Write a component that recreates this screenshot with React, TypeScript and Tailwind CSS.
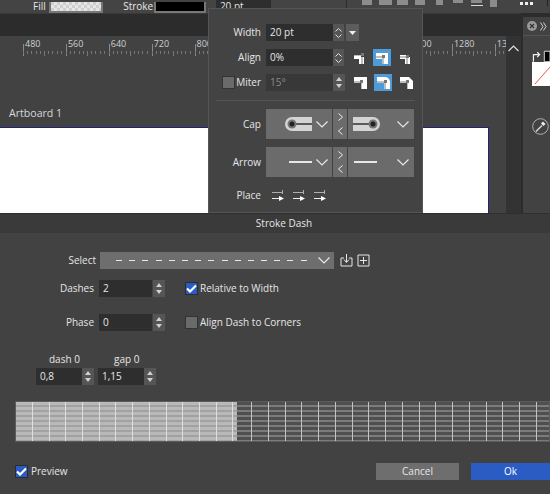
const Spin = ({ className = "" }: { className?: string }) => (
  <div className={`flex h-[17px] w-[12px] flex-col items-center justify-center gap-[3px] bg-[#555555] ${className}`}>
    <svg width="6" height="4" viewBox="0 0 6 4"><path d="M3 0 6 4H0z" fill="#d0d0d0" /></svg>
    <svg width="6" height="4" viewBox="0 0 6 4"><path d="M0 0h6L3 4z" fill="#d0d0d0" /></svg>
  </div>
);

const ChevSpin = () => (
  <div className="flex h-[17px] w-[11px] flex-col items-center justify-center gap-[2px] bg-[#555555]">
    <svg width="7" height="4" viewBox="0 0 7 4"><path d="M.5 3.500 3.500.5l3 3" fill="none" stroke="#e0e0e0" /></svg>
    <svg width="7" height="4" viewBox="0 0 7 4"><path d="M.5.5l3 3 3-3" fill="none" stroke="#e0e0e0" /></svg>
  </div>
);

const Chevron = () => (
  <svg width="12" height="7" viewBox="0 0 12 7"><path d="M.5.5 6 6l5.500-5.500" fill="none" stroke="#e8e8e8" strokeWidth="1.200" /></svg>
);

const Field = ({ value, className = "", dim }: { value: string; className?: string; dim?: boolean }) => (
  <div className={`flex h-[17px] items-center pl-1 text-[10px] ${dim ? "bg-[#383838] text-[#8a8a8a]" : "bg-[#2e2e2e] text-[#e6e6e6]"} ${className}`}>
    {value}
  </div>
);

// the little corner glyphs next to Align / Miter
const Corner = ({ active, d, dot }: { active?: boolean; d: string; dot: [number, number] }) => (
  <div className={`flex h-[17px] w-[18px] items-center justify-center ${active ? "bg-[#4f9ad8]" : ""}`}>
    <svg width="15" height="14" viewBox="0 0 15 14">
      <path d={d} fill="#ffffff" />
      <path d={`M1 ${dot[1] + 1}H${dot[0]}V13`} fill="none" stroke="#444444" strokeWidth="1" opacity="0.7" />
      <rect x={dot[0] - 1} y={dot[1] - 1} width="3" height="3" fill="#777777" />
    </svg>
  </div>
);

const alignInside = "M2 4h7v2h3v7H7V8H2z";
const alignCenter = "M1 2h12v11H7V8H1z";
const joinMiter = "M1 1h13v12H8V7H1z";
const joinRound = "M1 1h8a5 5 0 0 1 5 5v7H8V7H1z";
const joinBevel = "M1 1h9l4 4v8H8V7H1z";

const ToggleArrows = () => (
  <div className="flex h-[30px] w-[14px] flex-col items-center justify-center gap-[6px] bg-[#6b6b6b]">
    <svg width="5" height="8" viewBox="0 0 5 8"><path d="M.5.5 4.500 4 .5 7.500" fill="none" stroke="#eeeeee" /></svg>
    <svg width="5" height="8" viewBox="0 0 5 8"><path d="M4.500.5.5 4l4 3.500" fill="none" stroke="#eeeeee" /></svg>
  </div>
);

const CapLeft = () => (
  <svg width="27" height="14" viewBox="0 0 27 14">
    <path d="M7 0h20v14H7a7 7 0 0 1 0-14z" fill="#d4d4d4" />
    <path d="M7 6h20v2H7z" fill="#5a5a5a" />
    <circle cx="7" cy="7" r="4.500" fill="#777777" />
    <circle cx="7" cy="7" r="2.500" fill="#222222" />
  </svg>
);

const CapRight = () => (
  <svg width="27" height="14" viewBox="0 0 27 14">
    <path d="M20 0H0v14h20a7 7 0 0 0 0-14z" fill="#d4d4d4" />
    <path d="M20 6H0v2h20z" fill="#5a5a5a" />
    <circle cx="20" cy="7" r="4.500" fill="#777777" />
    <circle cx="20" cy="7" r="2.500" fill="#222222" />
  </svg>
);

const PlaceIcon = () => (
  <svg width="12" height="13" viewBox="0 0 12 13">
    <path d="M0 3.500h10M10.500 1v4" stroke="#b0b0b0" fill="none" />
    <path d="M0 9.500h7" stroke="#eeeeee" fill="none" />
    <path d="M7 7l5 2.500L7 12z" fill="#ffffff" />
  </svg>
);

const Ruler = () => {
  const labels = ["480", "560", "640", "720", "800", "880", "960", "1040", "1120", "1200", "1280", "13"];
  return (
    <div className="flex h-[20px] shrink-0 items-end overflow-hidden pl-[23px]">
      {labels.map((l) => (
        <div key={l} className="relative h-full w-[42.900px] shrink-0">
          <span className="absolute left-[2px] top-[2px] text-[9px] leading-[12px] text-[#cfcfcf]">{l}</span>
          <div className="absolute bottom-0 left-0 h-[12px] w-px bg-[#8a8a8a]" />
          <div className="absolute bottom-0 left-0 flex w-full justify-between pr-[4px]">
            {[0, 1, 2, 3, 4, 5, 6, 7, 8, 9].map((i) => (
              <div key={i} className={`w-px bg-[#777777] ${i === 5 ? "h-[5px]" : "h-[3px]"}`} />
            ))}
          </div>
        </div>
      ))}
    </div>
  );
};

const Check = () => (
  <div className="flex h-[13px] w-[13px] items-center justify-center border border-[#2c2c2c] bg-[#2a5cc4]">
    <svg width="11" height="9" viewBox="0 0 11 9"><path d="M1 4.500 4 7.500 10 1.500" fill="none" stroke="#ffffff" strokeWidth="2.200" /></svg>
  </div>
);

const Unchecked = () => <div className="h-[13px] w-[13px] border border-[#333333] bg-[#6a6a6a]" />;

const ToolbarIcons = () => (
  <svg className="ml-[10px] shrink-0" width="204" height="13" viewBox="0 0 204 13">
    <path d="M0 0h1v13H0z" fill="#2c2c2c" />
    <g fill="#8c8c8c">
      <path d="M16 0h10v5H16zM33 0h13v5H33zM51 0h11v5H51z" />
      <path d="M69 0h10v5H69z" />
      <path d="M90 0h7v5h-7zM107 0h10v3h-10zM125 0h11v3h-11zM144 0h7v7h-7z" />
    </g>
    <path d="M125 5h12v1h-12z" fill="#d8d8d8" />
    <path d="M174 2h3v3h-3zM179 2h3v3h-3zM184 2h3v3h-3z" fill="#eeeeee" />
    <path d="M201 0h1v6h-1z" fill="#222222" />
  </svg>
);

// preview strip: horizontal stripes with vertical ticks, left part is the dash
const Preview = () => (
  <div className="flex h-[41px] overflow-hidden border border-[#5c5c5c] bg-[#5c5c5c]">
    <div className="relative w-[221px] shrink-0 bg-[#b9b9b9]">
      <div className="absolute inset-0 bg-[repeating-linear-gradient(180deg,rgba(0,0,0,0)_0px,rgba(0,0,0,0)_3px,rgba(0,0,0,0.13)_3px,rgba(0,0,0,0.13)_5px)]" />
      <div className="absolute inset-0 flex gap-[15.700px] pl-[16px]">
        {Array.from({ length: 13 }).map((_, i) => (
          <div key={i} className="h-full w-px bg-[#dedede]" />
        ))}
      </div>
    </div>
    <div className="relative flex-1 bg-[#4f4f4f]">
      <div className="absolute inset-0 bg-[repeating-linear-gradient(180deg,rgba(255,255,255,0)_0px,rgba(255,255,255,0)_3px,rgba(255,255,255,0.25)_3px,rgba(255,255,255,0.25)_5px)]" />
      <div className="absolute inset-0 flex gap-[15.750px] pl-[14px]">
        {Array.from({ length: 18 }).map((_, i) => (
          <div key={i} className="h-full w-px bg-[#c4c4c4]" />
        ))}
      </div>
    </div>
  </div>
);

export default function App() {
  return (
    <div
      className="relative flex h-[494px] w-[550px] flex-col overflow-hidden bg-[#424242] text-[#e6e6e6]"
      style={{ fontFamily: '"Open Sans", "Liberation Sans", sans-serif' }}
    >
      {/* editor behind the dialog */}
      <div className="flex h-[213px] shrink-0 flex-col">
        <div className="flex h-[13px] shrink-0 items-end overflow-hidden bg-[#444444] text-[10px]">
          <span className="ml-[33px] w-[17px] leading-[14px]">Fill</span>
          <div className="h-[11px] w-[56px] border-x-2 border-b-2 border-[#777777] bg-[repeating-conic-gradient(#e6e6e6_0%_25%,#cfcfcf_0%_50%)] bg-[length:6px_6px]" />
          <span className="ml-[20px] w-[32px] leading-[14px]">Stroke</span>
          <div className="h-[11px] w-[54px] border-x-2 border-b-2 border-[#777777] bg-black" />
          <div className="ml-[10px] flex h-[13px] w-[57px] items-end bg-[#2e2e2e] pl-1 leading-[14px]">20 pt</div>
          <div className="w-[68px]" />
          <ToolbarIcons />
        </div>
        <div className="flex min-h-0 flex-1">
          <div className="flex min-w-0 flex-1 flex-col">
            <div className="h-[23px] shrink-0 border-t border-[#3a3a3a] bg-[#2c2c2c]" />
            <div className="flex min-h-0 flex-1">
              <div className="flex min-w-0 flex-1 flex-col">
                <Ruler />
                <div className="mt-[49px] pl-[9px] text-[10.600px] leading-[16px] text-[#d8d8d8]">Artboard 1</div>
                <div className="mt-[6px] mr-[17px] flex-1 border-r border-t border-[#23237a] bg-white" />
              </div>
              <div className="flex w-[15px] shrink-0 justify-center bg-[#333333] pt-[9px]">
                <svg width="11" height="7" viewBox="0 0 11 7"><path d="M.5 6 5.500 1l5 5" fill="none" stroke="#e0e0e0" strokeWidth="1.200" /></svg>
              </div>
            </div>
          </div>
          <div className="w-[2px] shrink-0 bg-[#2c2c2c]" />
          <div className="flex w-[27px] shrink-0 flex-col bg-[#424242]">
            <div className="h-[4px] bg-[#2c2c2c]" />
            <div className="flex h-[19px] items-center gap-[3px] border-b border-[#555555] pl-[4px]">
              <div className="flex h-[10px] w-[10px] items-center justify-center rounded-full bg-[#9a9a9a]">
                <svg width="6" height="6" viewBox="0 0 6 6"><path d="M1 1l4 4M5 1 1 5" stroke="#333333" strokeWidth="1.200" /></svg>
              </div>
              <svg width="7" height="9" viewBox="0 0 7 9"><path d="M.5.5l2.500 4-2.500 4M3.500.5l2.500 4-2.500 4" fill="none" stroke="#d0d0d0" /></svg>
            </div>
            <div className="mt-[14px] flex h-[12px] items-end pl-[9px]">
              <svg width="19" height="12" viewBox="0 0 19 12">
                <path d="M1.500 12V4.500h6M5.500 2l2.500 2.500L5.500 7" fill="none" stroke="#eeeeee" strokeWidth="1.300" />
                <path d="M13 1h6v11h-6z" fill="#000000" stroke="#dddddd" />
              </svg>
            </div>
            <div className="ml-[9px] h-[24px] bg-white">
              <svg width="18" height="24" viewBox="0 0 18 24"><path d="M3 22 18 5" stroke="#f05050" strokeWidth="1" /></svg>
            </div>
            <div className="ml-[9px] mt-[32px]">
              <svg width="17" height="17" viewBox="0 0 17 17">
                <circle cx="8.500" cy="8.500" r="7.800" fill="none" stroke="#b0b0b0" />
                <path d="M4 13.500 10 7.500" stroke="#d8d8d8" strokeWidth="1.500" />
                <path d="M9 5.500l2-2 2.500 2.500-2 2z" fill="#eeeeee" />
              </svg>
            </div>
          </div>
        </div>
      </div>

      {/* stroke popover */}
      <div className="absolute left-[208px] top-[8px] flex h-[205px] w-[215px] flex-col border border-[#555555] bg-[#434343] text-[10px]">
        <div className="mt-[15px] flex items-center">
          <span className="w-[52px] text-right">Width</span>
          <Field value="20 pt" className="ml-[5px] w-[67px]" />
          <ChevSpin />
          <div className="ml-[2px] flex h-[17px] w-[13px] items-center justify-center bg-[#5c5c5c]">
            <svg width="7" height="4" viewBox="0 0 7 4"><path d="M0 0h7L3.500 4z" fill="#eeeeee" /></svg>
          </div>
        </div>
        <div className="mt-[8px] flex items-center">
          <span className="w-[52px] text-right">Align</span>
          <Field value="0%" className="ml-[5px] w-[67px]" />
          <ChevSpin />
          <div className="ml-[6px] flex gap-[5px]">
            <Corner d={alignInside} dot={[10, 3]} />
            <Corner d={alignCenter} dot={[8, 5]} active />
            <Corner d={alignInside} dot={[9, 5]} />
          </div>
        </div>
        <div className="mt-[8px] flex items-center">
          <div className="ml-[13px] h-[13px] w-[13px] border border-[#333333] bg-[#6a6a6a]" />
          <span className="w-[26px] text-right">Miter</span>
          <Field value="15°" dim className="ml-[5px] w-[67px]" />
          <Spin className="w-[11px] bg-[#3e3e3e]" />
          <div className="ml-[6px] flex gap-[5px]">
            <Corner d={joinMiter} dot={[8, 5]} />
            <Corner d={joinRound} dot={[9, 5]} active />
            <Corner d={joinBevel} dot={[8, 5]} />
          </div>
        </div>
        <div className="mx-[7px] mt-[9px] h-px bg-[#555555]" />
        <div className="mt-[8px] flex items-center">
          <span className="w-[52px] text-right">Cap</span>
          <div className="ml-[5px] flex h-[30px] w-[66px] items-center justify-end gap-[4px] bg-[#6b6b6b] pr-[4px]">
            <CapLeft />
            <Chevron />
          </div>
          <div className="mx-[1px]"><ToggleArrows /></div>
          <div className="flex h-[30px] w-[66px] items-center justify-between bg-[#6b6b6b] pl-[5px] pr-[5px]">
            <CapRight />
            <Chevron />
          </div>
        </div>
        <div className="mt-[8px] flex items-center">
          <span className="w-[52px] text-right">Arrow</span>
          <div className="ml-[5px] flex h-[30px] w-[66px] items-center justify-end gap-[4px] bg-[#6b6b6b] pr-[4px]">
            <div className="h-[2px] w-[23px] bg-[#e8e8e8]" />
            <Chevron />
          </div>
          <div className="mx-[1px]"><ToggleArrows /></div>
          <div className="flex h-[30px] w-[66px] items-center justify-between bg-[#6b6b6b] pl-[6px] pr-[5px]">
            <div className="h-[2px] w-[23px] bg-[#e8e8e8]" />
            <Chevron />
          </div>
        </div>
        <div className="mt-[11px] flex items-center">
          <span className="w-[52px] text-right">Place</span>
          <div className="ml-[11px] flex gap-[9px]">
            <PlaceIcon />
            <PlaceIcon />
            <PlaceIcon />
          </div>
        </div>
      </div>

      {/* stroke dash dialog */}
      <div className="relative flex flex-1 flex-col border-t border-[#2f2f2f] bg-[#424242]">
        <div className="flex h-[19px] shrink-0 items-center justify-center bg-[#3a3a3a] pl-[18px] text-[10px]">Stroke Dash</div>
        <div className="mt-[19px] flex items-center text-[10px]">
          <span className="w-[96px] text-right">Select</span>
          <div className="ml-[4px] flex h-[17px] w-[234px] items-center justify-between bg-[#6e6e6e] pl-[16px] pr-[4px]">
            <div className="flex gap-[7.200px]">
              {Array.from({ length: 15 }).map((_, i) => (
                <div key={i} className="h-px w-[6px] bg-[#e8e8e8]" />
              ))}
            </div>
            <Chevron />
          </div>
          <svg className="ml-[6px]" width="13" height="13" viewBox="0 0 13 13">
            <path d="M4 4H1v8h11V4H9M6.500 0v8M4 5.500l2.500 3 2.500-3" fill="none" stroke="#e6e6e6" />
          </svg>
          <svg className="ml-[4px]" width="13" height="13" viewBox="0 0 13 13">
            <path d="M1 1h11v11H1zM6.500 3v7M3 6.500h7" fill="none" stroke="#e6e6e6" />
          </svg>
        </div>
        <div className="mt-[11px] flex items-center text-[10px]">
          <span className="w-[94px] text-right">Dashes</span>
          <Field value="2" className="ml-[5px] w-[53px]" />
          <Spin className="ml-[1px]" />
          <div className="ml-[20px]"><Check /></div>
          <span className="ml-[2px]">Relative to Width</span>
        </div>
        <div className="mt-[17px] flex items-center text-[10px]">
          <span className="w-[94px] text-right">Phase</span>
          <Field value="0" className="ml-[5px] w-[53px]" />
          <Spin className="ml-[1px]" />
          <div className="ml-[20px]"><Unchecked /></div>
          <span className="ml-[2px]">Align Dash to Corners</span>
        </div>
        <div className="mt-[21px] flex pl-[36px] text-[10px]">
          <div className="flex flex-col">
            <span className="pl-[13px] leading-[14px]">dash 0</span>
            <div className="mt-[2px] flex">
              <Field value="0,8" className="w-[46px]" />
              <Spin />
            </div>
          </div>
          <div className="ml-[4px] flex flex-col">
            <span className="pl-[16px] leading-[14px]">gap 0</span>
            <div className="mt-[2px] flex">
              <Field value="1,15" className="w-[46px]" />
              <Spin />
            </div>
          </div>
        </div>
        <div className="mt-[16px] ml-[15px]"><Preview /></div>
        <div className="mt-[21px] flex items-center text-[10px]">
          <div className="ml-[15px]"><Check /></div>
          <span className="ml-[3px]">Preview</span>
          <div className="ml-auto flex gap-[12px]">
            <div className="flex h-[17px] w-[83px] items-center justify-center bg-[#6e6e6e]">Cancel</div>
            <div className="flex h-[17px] w-[79px] items-center justify-center bg-[#2a5cc4] text-white">Ok</div>
          </div>
        </div>
      </div>
    </div>
  );
}
